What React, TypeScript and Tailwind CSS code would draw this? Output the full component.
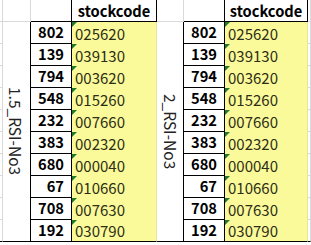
import React from 'react';

const rows = [
  { n: '802', code: '025620' },
  { n: '139', code: '039130' },
  { n: '794', code: '003620' },
  { n: '548', code: '015260' },
  { n: '232', code: '007660' },
  { n: '383', code: '002320' },
  { n: '680', code: '000040' },
  { n: '67', code: '010660' },
  { n: '708', code: '007630' },
  { n: '192', code: '030790' },
];

const font = { fontFamily: '"Noto Sans CJK KR", "Noto Sans", sans-serif' };

// one block: label column + number column + yellow code column
const Block: React.FC<{ label: string; labelWidth: string; codeWidth: string; labelPad: string }> = ({
  label,
  labelWidth,
  codeWidth,
  labelPad,
}) => (
  <>
    <div className={`${labelWidth} flex flex-col shrink-0`}>
      <div className="h-[22px] border-r border-b border-[#d9d9d9]" />
      <div
        className={`h-[220px] border-r border-b border-black flex items-center justify-center ${labelPad} text-[15.5px] text-[#222] leading-none`}
      >
        <span className="[writing-mode:vertical-rl]">{label}</span>
      </div>
    </div>

    <div className="w-[41px] flex flex-col shrink-0">
      <div className="h-[22px] border-r border-b border-black" />
      {rows.map((r, i) => (
        <div
          key={i}
          className="h-[22px] border-r border-b border-black flex items-center justify-end pr-[7px] font-bold text-[14.67px] text-black leading-none"
        >
          {r.n}
        </div>
      ))}
    </div>

    <div className={`${codeWidth} flex flex-col shrink-0`}>
      <div className="h-[22px] border-r border-b border-black flex items-center justify-center font-bold text-[14.67px] text-black leading-none pt-[2px]">
        stockcode
      </div>
      <div className="h-[220px] bg-[#fafa9b] border-r border-r-[#e6e6a0] border-b border-b-black flex flex-col">
        {rows.map((r, i) => (
          <div
            key={i}
            className={`relative ${i === rows.length - 1 ? 'h-[21px]' : 'h-[22px]'} flex items-center pl-[3px] text-[15px] text-[#2e2e14] leading-none`}
          >
            <svg className="absolute left-0 top-0" width="5" height="5" viewBox="0 0 5 5">
              <polygon points="0,0 5,0 0,5" fill="#1f7a2e" />
            </svg>
            {r.code}
          </div>
        ))}
      </div>
    </div>
  </>
);

const App: React.FC = () => {
  return (
    <div className="w-[311px] h-[245px] bg-white overflow-hidden flex" style={font}>
      {/* left sliver of previous column */}
      <div className="w-[3px] flex flex-col shrink-0">
        <div className="h-[22px] border-r border-b border-[#d9d9d9]" />
        {rows.map((_, i) => (
          <div
            key={i}
            className={`h-[22px] border-r border-[#d9d9d9] border-b ${i === rows.length - 1 ? 'border-b-black' : ''}`}
          />
        ))}
      </div>

      <Block label="1.5_RSI-No3" labelWidth="w-[28px]" codeWidth="w-[85px]" labelPad="pr-[2px]" />
      <Block label="2_RSI-No3" labelWidth="w-[27px]" codeWidth="w-[83px]" labelPad="pr-0" />

      {/* right sliver */}
      <div className="w-[3px] flex flex-col shrink-0">
        <div className="h-[22px] border-r border-b border-[#d9d9d9]" />
        {rows.map((_, i) => (
          <div
            key={i}
            className={`h-[22px] border-r border-[#d9d9d9] border-b ${i === rows.length - 1 ? 'border-b-black' : ''}`}
          />
        ))}
      </div>
    </div>
  );
};

export default App;
